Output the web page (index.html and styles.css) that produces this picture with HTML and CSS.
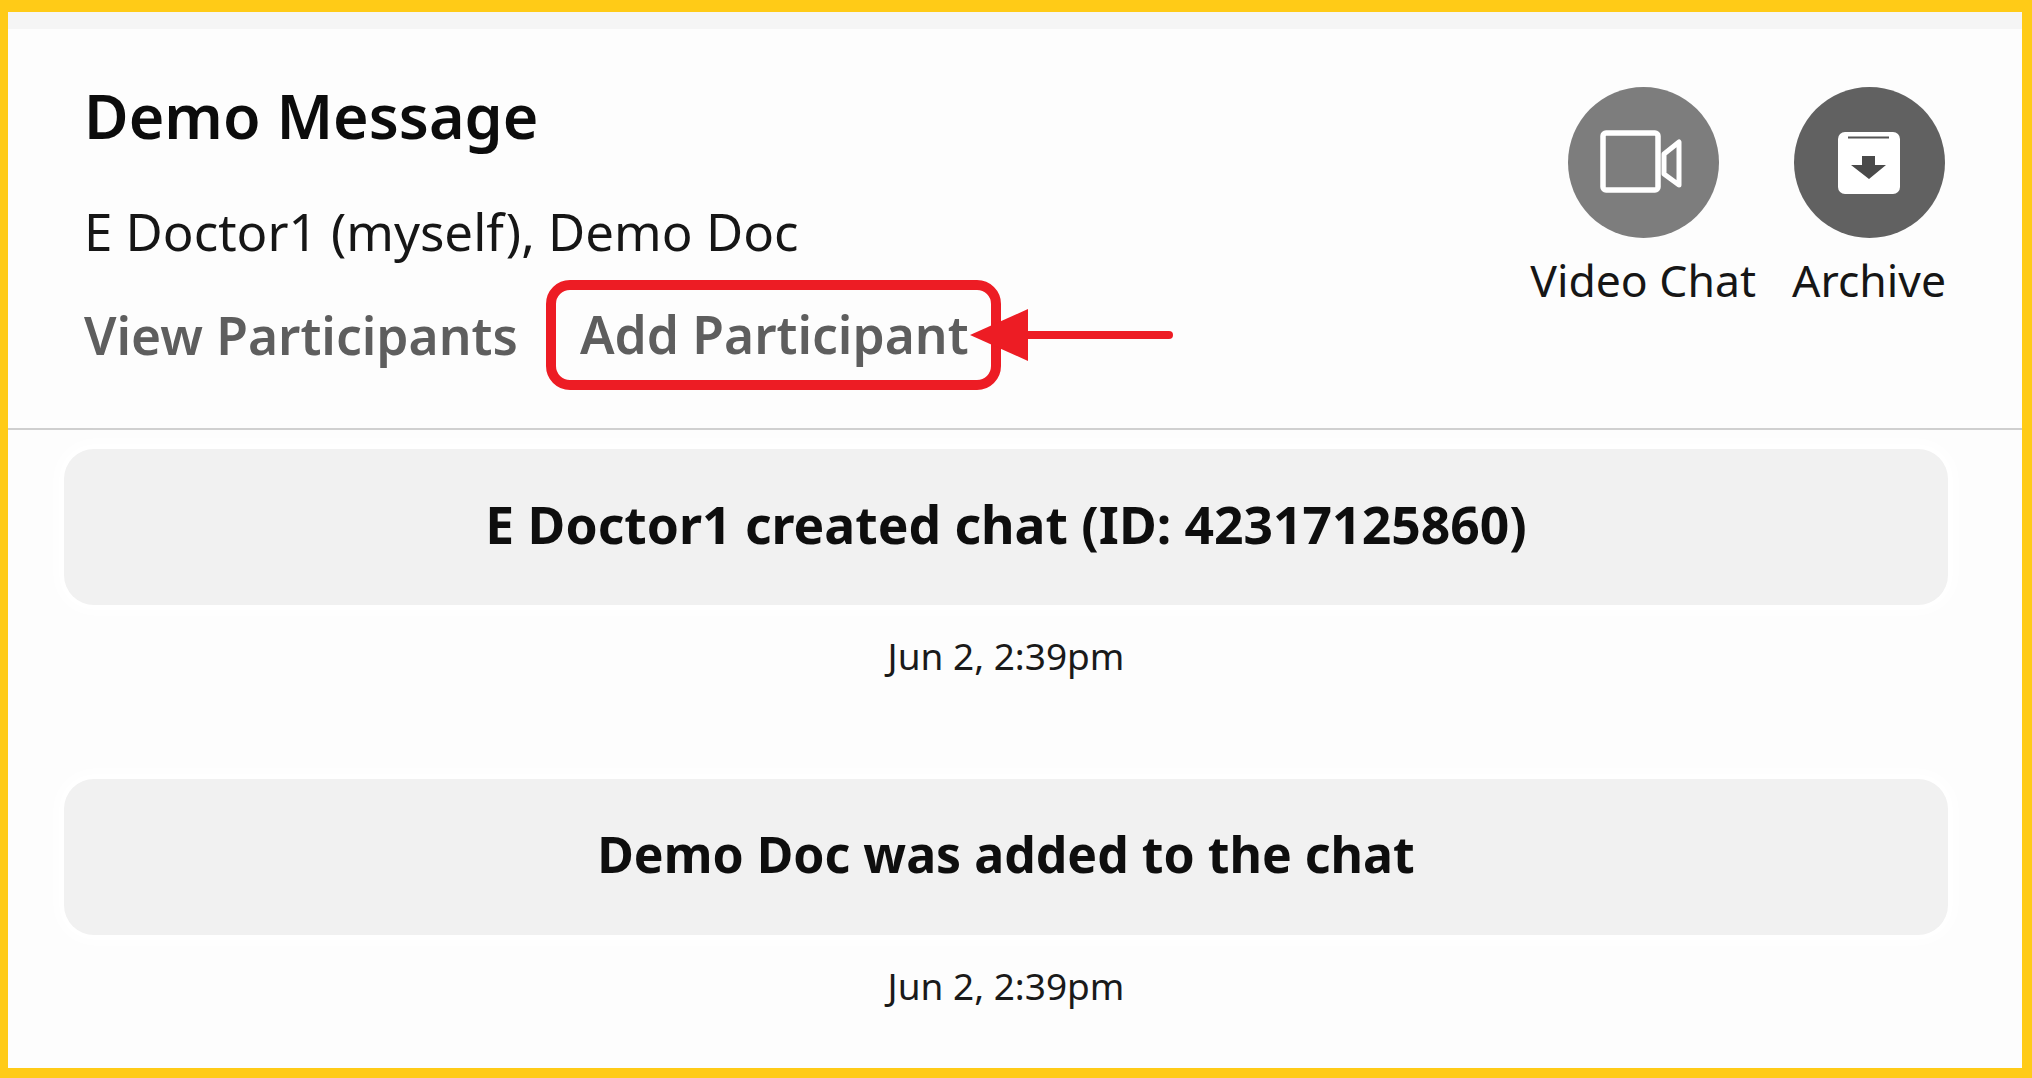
FILE: index.html
```html
<!DOCTYPE html>
<html lang="en">
<head>
<meta charset="utf-8">
<title>Demo Message</title>
<link rel="stylesheet" href="styles.css">
</head>
<body>
<main class="frame">
  <div class="strip"></div>
  <header class="head">
    <div class="info">
      <h1 class="title">Demo Message</h1>
      <p class="people">E Doctor1 (myself), Demo Doc</p>
      <nav class="links">
        <a class="link">View Participants</a>
        <a class="link link-marked">Add Participant</a>
      </nav>
    </div>
    <div class="actions">
      <div class="action action-video">
        <span class="circle circle-video">
          <svg class="icon icon-video" viewBox="0 0 90 66" width="90" height="66">
            <rect x="3" y="3" width="55" height="57" rx="3" fill="none" stroke="#fff" stroke-width="5.5"/>
            <path d="M64 24 L79 12 V55 L64 44 Z" fill="none" stroke="#fff" stroke-width="5" stroke-linejoin="round"/>
          </svg>
        </span>
        <span class="label">Video Chat</span>
      </div>
      <div class="action action-archive">
        <span class="circle circle-archive">
          <svg class="icon" viewBox="0 0 62 62" width="62" height="62">
            <rect x="0" y="0" width="62" height="62" rx="7" fill="#fff"/>
            <rect x="10" y="4.5" width="41" height="2" fill="#555"/>
            <path d="M24 24 H37 V33 H48 L31 47 L13 33 H24 Z" fill="#4a4a4a"/>
          </svg>
        </span>
        <span class="label">Archive</span>
      </div>
    </div>
  </header>
  <section class="feed">
    <article class="event">
      <div class="bubble bubble-long">E Doctor1 created chat (ID: 42317125860)</div>
      <time class="stamp">Jun 2, 2:39pm</time>
    </article>
    <article class="event">
      <div class="bubble bubble-short">Demo Doc was added to the chat</div>
      <time class="stamp">Jun 2, 2:39pm</time>
    </article>
  </section>
  <svg class="arrow" viewBox="0 0 206 54" width="206" height="54">
    <path d="M58 26 H199" stroke="#ed1c24" stroke-width="8" stroke-linecap="round"/>
    <path d="M0 26 L58 0 V52 Z" fill="#ed1c24"/>
  </svg>
</main>
</body>
</html>
```
FILE: styles.css
```css
* { box-sizing: border-box; }
html, body { margin: 0; padding: 0; }
body {
  width: 2032px;
  height: 1078px;
  overflow: hidden;
  font-family: "Noto Sans", "Open Sans", sans-serif;
  color: #111;
  background: #ffcb17;
}
.frame {
  position: relative;
  margin: 12px 10px 10px 8px;
  height: 1056px;
  background: #fdfdfd;
  overflow: hidden;
}
.strip { height: 17px; background: #f5f5f5; }
.head {
  height: 401px;
  border-bottom: 2px solid #cfcfcf;
  display: flex;
  justify-content: space-between;
  padding: 52px 76px 0 76px;
}
.title {
  margin: 0;
  font-size: 61px;
  line-height: 70px;
  font-weight: 600;
  color: #0c0c0c;
}
.people {
  margin: 50px 0 0;
  font-size: 51px;
  line-height: 60px;
  font-weight: 400;
  color: #161616;
}
.links {
  display: flex;
  align-items: center;
  gap: 28px;
  margin-top: 19px;
}
.link {
  font-size: 51.5px;
  line-height: 60px;
  font-weight: 600;
  color: #5e5e5e;
}
.link-marked {
  border: 10px solid #ed1c24;
  border-radius: 24px;
  width: 455px;
  height: 110px;
  padding: 14px 0 0 24px;
}
.actions {
  display: flex;
  gap: 36px;
  padding-top: 6px;
}
.action {
  display: flex;
  flex-direction: column;
  align-items: center;
}
.circle {
  width: 151px;
  height: 151px;
  border-radius: 50%;
  display: flex;
  align-items: center;
  justify-content: center;
}
.circle-video { background: radial-gradient(circle, #7d7d7d 0 78%, #696969 100%); }
.circle-archive { background: radial-gradient(circle, #616161 0 72%, #474747 100%); }
.icon { display: block; }
.icon-video { margin-left: 4px; }
.label {
  margin-top: 17px;
  font-size: 44.5px;
  line-height: 50px;
  color: #161616;
  white-space: nowrap;
}
.feed {
  padding: 19px 74px 0 56px;
  display: flex;
  flex-direction: column;
  gap: 101px;
}
.event {
  display: flex;
  flex-direction: column;
  align-items: center;
}
.bubble {
  width: 100%;
  height: 156px;
  padding-bottom: 6px;
  border-radius: 30px;
  background: #f1f1f1;
  box-shadow: 0 0 14px 8px #fff;
  display: flex;
  align-items: center;
  justify-content: center;
  font-weight: 700;
  color: #0e0e0e;
}
.bubble-long { font-size: 51.6px; }
.bubble-short { font-size: 50px; }
.stamp {
  margin-top: 29px;
  font-size: 37px;
  line-height: 44px;
  color: #1a1a1a;
}
.arrow {
  position: absolute;
  left: 962px;
  top: 297px;
}
```
